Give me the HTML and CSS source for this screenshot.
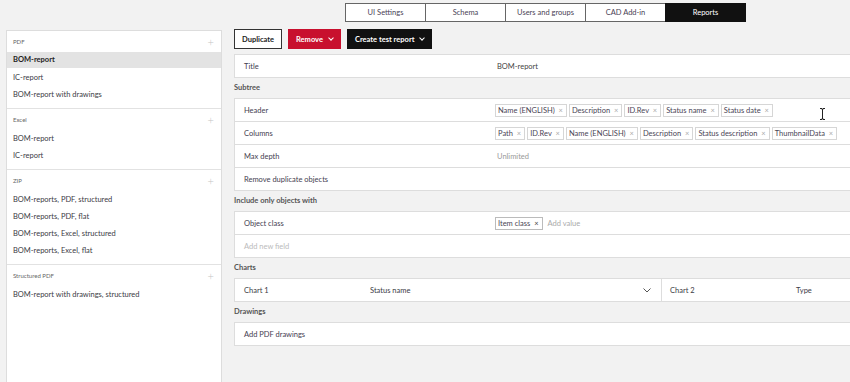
FILE: index.html
```html
<!DOCTYPE html>
<html lang="en">
  <head>
    <meta charset="UTF-8" />
    <title>Reports</title>
    <link rel="stylesheet" href="styles.css">
  </head>
  <body>
    <div class="topbar">
      <div class="tabs">
        <div class="tab">UI Settings</div>
        <div class="tab">Schema</div>
        <div class="tab">Users and groups</div>
        <div class="tab">CAD Add-in</div>
        <div class="tab active">Reports</div>
      </div>
    </div>

    <div class="layout">
      <div class="sidebar">
        <div class="group">
          <div class="group-head"><span>PDF</span><span class="plus">+</span></div>
          <div class="item selected">BOM-report</div>
          <div class="item">IC-report</div>
          <div class="item">BOM-report with drawings</div>
        </div>
        <div class="group">
          <div class="group-head"><span>Excel</span><span class="plus">+</span></div>
          <div class="item">BOM-report</div>
          <div class="item">IC-report</div>
        </div>
        <div class="group">
          <div class="group-head"><span>ZIP</span><span class="plus">+</span></div>
          <div class="item">BOM-reports, PDF, structured</div>
          <div class="item">BOM-reports, PDF, flat</div>
          <div class="item">BOM-reports, Excel, structured</div>
          <div class="item">BOM-reports, Excel, flat</div>
        </div>
        <div class="group last">
          <div class="group-head"><span>Structured PDF</span><span class="plus">+</span></div>
          <div class="item">BOM-report with drawings, structured</div>
        </div>
      </div>

      <div class="main">
        <div class="actions">
          <button class="btn btn-outline">Duplicate</button>
          <button class="btn btn-red">Remove <span class="caret"></span></button>
          <button class="btn btn-dark">Create test report <span class="caret"></span></button>
        </div>

        <div class="card first">
          <div class="row">
            <div class="label">Title</div>
            <div class="value">BOM-report</div>
          </div>
        </div>

        <div class="section-title">Subtree</div>
        <div class="card">
          <div class="row">
            <div class="label">Header</div>
            <div class="value tags">
              <span class="tag">Name (ENGLISH) <i>×</i></span>
              <span class="tag">Description <i>×</i></span>
              <span class="tag">ID.Rev <i>×</i></span>
              <span class="tag">Status name <i>×</i></span>
              <span class="tag">Status date <i>×</i></span>
            </div>
            <svg class="cursor" width="7" height="12" viewBox="0 0 7 12">
              <path d="M1 0.5h2v1h1v-1h2M3.5 1.5v9M1 11.5h2v-1h1v1h2" fill="none" stroke="#222" stroke-width="1"/>
            </svg>
          </div>
          <div class="row">
            <div class="label">Columns</div>
            <div class="value tags">
              <span class="tag">Path <i>×</i></span>
              <span class="tag">ID.Rev <i>×</i></span>
              <span class="tag">Name (ENGLISH) <i>×</i></span>
              <span class="tag">Description <i>×</i></span>
              <span class="tag">Status description <i>×</i></span>
              <span class="tag">ThumbnailData <i>×</i></span>
            </div>
          </div>
          <div class="row">
            <div class="label">Max depth</div>
            <div class="value muted">Unlimited</div>
          </div>
          <div class="row">
            <div class="label">Remove duplicate objects</div>
          </div>
        </div>

        <div class="section-title">Include only objects with</div>
        <div class="card">
          <div class="row">
            <div class="label">Object class</div>
            <div class="value tags">
              <span class="tag dark">Item class <i>×</i></span>
              <span class="add-value">Add value</span>
            </div>
          </div>
          <div class="row">
            <div class="label placeholder">Add new field</div>
          </div>
        </div>

        <div class="section-title">Charts</div>
        <div class="card">
          <div class="row chart-row">
            <div class="chart">
              <div class="chart-name">Chart 1</div>
              <div class="chart-field">Status name</div>
              <svg class="chevron" width="8" height="5" viewBox="0 0 8 5">
                <path d="M0.5 0.5l3.5 3.5l3.5-3.5" fill="none" stroke="#555" stroke-width="1"/>
              </svg>
            </div>
            <div class="chart second">
              <div class="chart-name">Chart 2</div>
              <div class="chart-field">Type</div>
            </div>
          </div>
        </div>

        <div class="section-title">Drawings</div>
        <div class="card">
          <div class="row">
            <div class="label">Add PDF drawings</div>
          </div>
        </div>
      </div>
    </div>
  </body>
</html>
```

FILE: styles.css
```css
html, body {
  margin: 0;
  height: 100%;
}
body {
  background-color: #f2f2f2;
  font-family: Lato, "Liberation Sans", sans-serif;
  font-size: 7.5px;
  color: #3b3b45;
  overflow: hidden;
}

/* top tabs */
.topbar {
  height: 28px;
  padding-left: 346px;
  padding-top: 3px;
  box-sizing: border-box;
}
.tabs {
  display: flex;
}
.tab {
  width: 81px;
  height: 19px;
  line-height: 17px;
  box-sizing: border-box;
  border: 1px solid #666;
  margin-left: -1px;
  background-color: #fff;
  text-align: center;
  color: #4a3f55;
}
.tab.active {
  background-color: #111;
  border-color: #111;
  color: #fff;
}

/* page columns */
.layout {
  display: flex;
  padding-left: 6px;
  height: calc(100% - 28px);
  box-sizing: border-box;
}
.sidebar {
  width: 216px;
  flex-shrink: 0;
  box-sizing: border-box;
  margin-top: 2px;
  background-color: #fff;
  border: 1px solid #ddd;
  border-bottom: none;
}
.group {
  padding-bottom: 5px;
  border-bottom: 1px solid #e2e2e2;
}
.group.last {
  border-bottom: none;
}
.group-head {
  height: 21px;
  display: flex;
  justify-content: space-between;
  align-items: center;
  padding: 0 7px 0 6px;
  font-size: 6px;
  color: #666;
}
.plus {
  font-size: 11px;
  font-weight: 300;
  color: #c4c4c4;
}
.item {
  height: 17px;
  line-height: 17px;
  padding-left: 6px;
}
.item.selected {
  height: 16px;
  line-height: 16px;
  margin-bottom: 1px;
  background-color: #e3e3e3;
  font-weight: bold;
  color: #222;
}

/* main area */
.main {
  flex: 1;
  min-width: 0;
  margin-left: 12px;
}
.actions {
  display: flex;
  gap: 6px;
  margin-top: 1px;
}
.btn {
  height: 20px;
  padding: 0 7px;
  font-family: inherit;
  font-size: 7.5px;
  font-weight: bold;
  border: 1px solid #111;
  background-color: #111;
  color: #fff;
  display: flex;
  align-items: center;
  gap: 4px;
}
.btn-outline {
  background-color: #fff;
  border-color: #333;
  color: #222;
}
.btn-red {
  background-color: #c8102e;
  border-color: #c8102e;
}
.caret {
  width: 3px;
  height: 3px;
  border-right: 1px solid #fff;
  border-bottom: 1px solid #fff;
  transform: rotate(45deg);
  margin-top: -3px;
  margin-left: 2px;
}

.card {
  background-color: #fff;
  border: 1px solid #ddd;
  border-right: none;
}
.card.first {
  margin-top: 5px;
}
.row {
  position: relative;
  display: flex;
  align-items: center;
  height: 22px;
  border-top: 1px solid #ddd;
}
.row:first-child {
  border-top: none;
}
.label {
  width: 253px;
  padding-left: 9px;
  flex-shrink: 0;
  color: #444050;
}
.label.placeholder {
  color: #bbb;
}
.value {
  color: #444;
}
.value.muted {
  color: #999;
}
.section-title {
  height: 20px;
  line-height: 20px;
  font-weight: bold;
  color: #555;
}

.tags {
  display: flex;
  gap: 2px;
  margin-left: -2px;
}
.tag {
  height: 13px;
  line-height: 12px;
  box-sizing: border-box;
  border: 1px solid #d6d6d6;
  padding: 0 3px 0 2px;
  color: #4a4555;
  white-space: nowrap;
}
.tag i {
  font-style: normal;
  color: #aaa;
  margin-left: 2px;
}
.tag.dark {
  border-color: #bbb;
}
.tag.dark i {
  color: #444;
}
.add-value {
  margin-left: 3px;
  color: #aaa;
  line-height: 13px;
}
.cursor {
  position: absolute;
  left: 584px;
  top: 9px;
}

/* charts */
.chart-row {
  align-items: stretch;
}
.chart {
  width: 426px;
  flex-shrink: 0;
  display: flex;
  align-items: center;
  padding-left: 9px;
  box-sizing: border-box;
}
.chart-name {
  width: 126px;
}
.chart-field {
  flex: 1;
}
.chevron {
  margin-right: 10px;
}
.chart.second {
  flex: 1;
  flex-shrink: 1;
  min-width: 0;
  width: auto;
  border-left: 1px solid #ddd;
  padding-left: 8px;
}
```
